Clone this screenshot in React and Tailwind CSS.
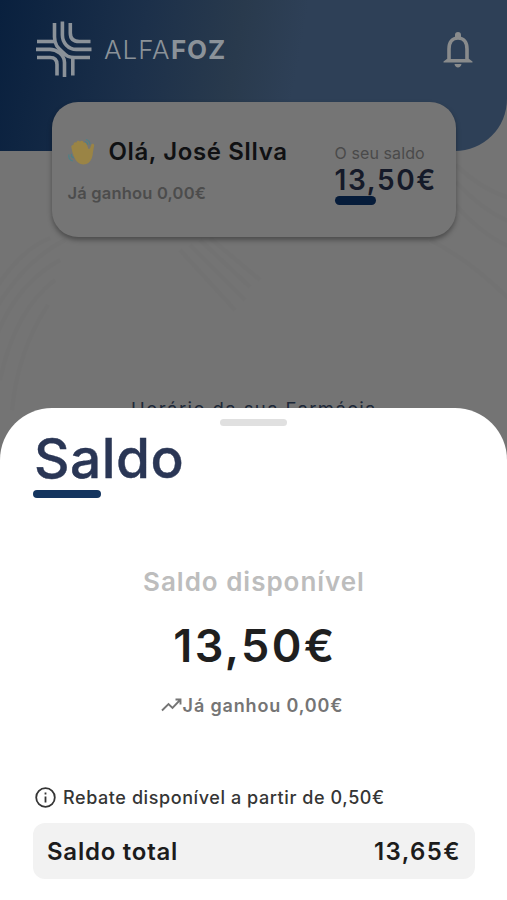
import React from 'react';

const Logo = () => (
  <svg className="ml-[35px] mt-[21px] h-[57px] w-[57px] shrink-0" viewBox="35 21 57 57" fill="none" stroke="#8b9299" strokeWidth="3.6">
    <path d="M54.500 23V37c0 8 3.500 11 8 15 4 4 6 5.500 12 5.500H90" />
    <path d="M62.400 21.500V35c0 8 6 14.400 14 14.400H91.500" />
    <path d="M70.300 23V33c0 6 3 8.500 9 8.500H90.500" />
    <path d="M37 41.500H55" />
    <path d="M36 49.400H50c6 0 14.500 5 14.500 13V77" />
    <path d="M37 57.500H50c5 0 7 2.500 7 7V75.500" />
    <path d="M72.800 75.500V58" />
  </svg>
);

const Bell = () => (
  <svg className="ml-auto mr-[34px] mt-[32px] h-[36px] w-[30px] shrink-0" viewBox="0 0 30 36" fill="none">
    <path d="M6 28.500V17c0-7 3.500-11 9-11s9 4 9 11v11.500" stroke="#898b8c" strokeWidth="3.600" />
    <path d="M12 5.500V3a3 3 0 0 1 6 0v2.500zM0.500 30.500v-1L4.500 26.500v.5h21v-.5l4 3v1zM11.500 32h7c-.5 4.500-6.500 4.500-7 0z" fill="#898b8c" />
  </svg>
);

const Wave = () => (
  <svg className="h-[28px] w-[28px]" viewBox="0 0 28 28" fill="none">
    <path d="M3.500 10c-.8-2 .5-3.500 2-3-.5-2 1.500-3.500 3-2.500 0-2 2.500-2.500 3.500-.8 1-1.800 3.500-1 3.500.8 2-.5 3 .8 3.500 2.500l1.500 4 1.500-.6 1.200-3.400c.6-2 3-1.600 3 .3l-1.200 6.700c-.4 5-1.500 8-4 10.500-3 2.500-8 2.500-11 0-3.500-3-5.500-9-6.500-14.500z" fill="#9a8445" />
    <path d="M18 1.500c2.500.5 4 2.500 4 5M16.800 3.500c1.700.3 2.700 1.500 2.700 3.200M1 16.500c-.8 3 .8 6 4 6.500M3.500 16c-.5 2 .5 3.500 2.300 4" stroke="#4d8187" strokeWidth="1.200" />
  </svg>
);

const Background = () => (
  <svg className="absolute inset-x-0 top-0 h-[460px] w-full" viewBox="0 0 507 460" fill="none" stroke="#6f6f6f" strokeWidth="4" opacity=".28">
    <path d="M-5 290Q20 250 50 238M-5 310Q25 260 65 240M-5 340Q15 285 60 260M0 380Q15 310 55 280M12 410Q18 350 48 305" />
    <path d="M180 250L235 310M190 245L245 300M200 240L250 287M210 238L260 280" />
    <path d="M456 165Q482 190 510 198M456 182Q482 210 510 222M456 205Q482 235 510 247M430 240Q470 260 510 300" />
  </svg>
);

const Header = () => (
  <div className="relative flex h-[151px] items-start rounded-br-[52px] bg-[linear-gradient(100deg,#09203e_0%,#1c304a_28%,#293a4d_46%,#2e4057_58%,#2e4057_100%)]">
    <Logo />
    <div className="ml-[12px] mt-[34px] flex text-[26px] leading-[32px] text-[#8b9299]">
      <span className="w-[67px] font-light tracking-[1px]">ALFA</span>
      <span className="font-bold tracking-[0.8px]">FOZ</span>
    </div>
    <Bell />
  </div>
);

const BalanceCard = () => (
  <div className="relative mx-auto -mt-[49px] flex h-[135px] w-[404px] justify-between rounded-[26px] bg-[#757575] pl-4 pr-[21px] shadow-[0_3px_5px_rgba(0,0,0,0.35)]">
    <div className="pt-[34px]">
      <div className="flex items-center">
        <Wave />
        <h1 className="ml-[13px] whitespace-nowrap text-[24px] font-semibold leading-[31px] tracking-[0.6px] text-[#101113]">Olá, José SIlva</h1>
      </div>
      <p className="mt-[15px] text-[16.5px] font-semibold leading-[22px] tracking-[0.2px] text-[#4c4c4c]">Já ganhou 0,00€</p>
    </div>
    <div className="w-[100px] whitespace-nowrap pt-[41px]">
      <p className="text-[16px] leading-5 tracking-[0.1px] text-[#4a4a4a]">O seu saldo</p>
      <p className="mt-[2px] text-[28px] font-semibold leading-[30px] tracking-[1.6px] text-[#151a29]">13,50€</p>
      <div className="mt-px h-[9px] w-[41px] rounded-full bg-[#061c3a]" />
    </div>
  </div>
);

const BalanceSheet = () => (
  <div className="absolute inset-x-0 bottom-0 flex h-[492px] flex-col rounded-t-[52px] bg-white">
    <div className="mx-auto mt-[11px] h-[7px] w-[67px] rounded-full bg-[#e0e0e0]" />
    <h2 className="ml-[34px] mt-[2px] h-[60px] text-[55px] font-medium leading-[60px] tracking-[0.5px] text-[#2a3655] [-webkit-text-stroke:0.4px_#2a3655]">Saldo</h2>
    <div className="ml-[33px] mt-[2px] h-[8px] w-[68px] rounded-full bg-[#14355f]" />
    <div className="mt-[68px] flex flex-col items-center whitespace-nowrap">
      <p className="pl-px text-[26px] font-semibold leading-[32px] tracking-[0.97px] text-[#bdbdbd]">Saldo disponível</p>
      <p className="mt-[20px] pl-[3px] text-[45px] font-semibold leading-[55px] tracking-[2.4px] text-[#1f1f1f]">13,50€</p>
      <div className="mt-[20px] flex h-6 items-center pr-[3px] text-[#757575]">
        <svg className="h-[14px] w-[22px]" viewBox="0 0 22 14" fill="none" stroke="currentColor" strokeWidth="1.9">
          <path d="M1 12.500L7.500 6l4 4 8-8.500M14.500 1.500h5v5" />
        </svg>
        <p className="text-[18px] font-semibold tracking-[0.85px]">Já ganhou 0,00€</p>
      </div>
    </div>
    <div className="ml-[35px] mt-[68px] flex h-6 items-center whitespace-nowrap text-[#353535]">
      <svg className="h-[21px] w-[21px]" viewBox="0 0 21 21" fill="none" stroke="currentColor" strokeWidth="1.800">
        <circle cx="10.500" cy="10.500" r="9.300" />
        <path d="M10.500 9.500v6M10.500 5.500v2" />
      </svg>
      <p className="ml-[7px] text-[18px] font-medium tracking-[0.58px]">Rebate disponível a partir de 0,50€</p>
    </div>
    <div className="ml-[33px] mr-8 mt-[14px] flex h-[56px] items-center justify-between rounded-xl bg-[#f2f2f2] px-[14px] pt-px text-[24px] font-semibold text-[#1c1c1c]">
      <span className="tracking-[0.75px]">Saldo total</span>
      <span className="tracking-[1.4px]">13,65€</span>
    </div>
  </div>
);

export default function App() {
  return (
    <div className="relative h-[900px] w-[507px] overflow-hidden bg-[#747474] font-['Inter',sans-serif]">
      <Background />
      <Header />
      <BalanceCard />
      <p className="relative mt-[160px] pl-px text-center text-[18.5px] leading-[24px] tracking-[1.4px] text-[#1d2838]">Horário da sua Farmácia</p>
      <BalanceSheet />
    </div>
  );
}
